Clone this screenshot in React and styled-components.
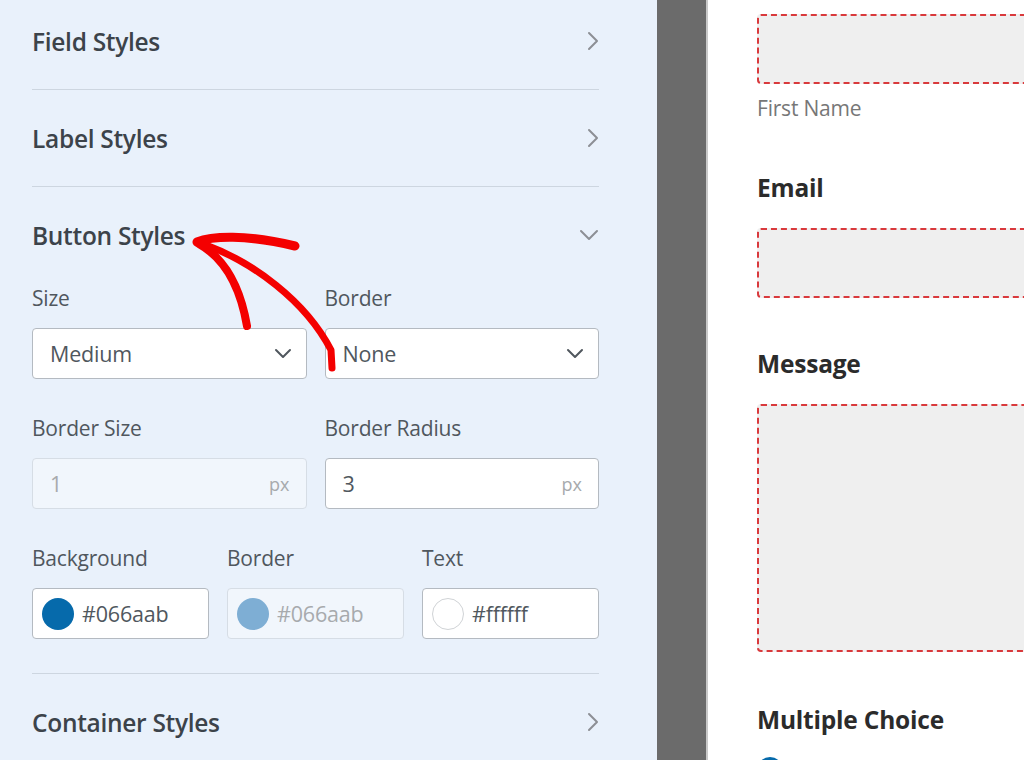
import React from "react";
import styled, { createGlobalStyle } from "styled-components";

const GlobalStyle = createGlobalStyle`
  html, body {
    margin: 0;
    padding: 0;
    overflow: hidden;
  }
  body {
    font-family: "Open Sans", "Noto Sans", sans-serif;
  }
`;

const Page = styled.div`
  position: relative;
  display: flex;
  width: 1024px;
  height: 760px;
  overflow: hidden;
  background: #fff;
`;

const Panel = styled.div`
  width: 657px;
  flex-shrink: 0;
  background: #e9f1fb;
  padding: 0 58px 0 32px;
  box-sizing: border-box;
  overflow: hidden;
`;

const SectionList = styled.div`
  display: flex;
  flex-direction: column;
  margin-top: -7px;
`;

const Section = styled.div`
  border-bottom: 1px solid ${(p) => (p.last ? "transparent" : "#cdd6e0")};
`;

const Header = styled.div`
  display: flex;
  align-items: center;
  justify-content: space-between;
  height: 96px;
`;

const Title = styled.h2`
  margin: 0;
  font-size: 24.5px;
  font-weight: 600;
  color: #3c434a;
  letter-spacing: -0.3px;
`;

const Chevron = styled.svg`
  fill: none;
  stroke: ${(p) => p.color || "#8c8f94"};
  stroke-width: 2;
  stroke-linecap: round;
  stroke-linejoin: round;
  flex-shrink: 0;
`;

const Body = styled.div`
  display: flex;
  flex-direction: column;
  gap: 37px;
  padding: 3px 0 34px;
`;

const Grid = styled.div`
  display: grid;
  grid-template-columns: repeat(${(p) => p.cols}, 1fr);
  column-gap: 18px;
`;

const Field = styled.div`
  display: flex;
  flex-direction: column;
  gap: 18px;
`;

const Label = styled.label`
  font-size: 21px;
  line-height: 24px;
  color: #50575e;
  letter-spacing: -0.2px;
`;

const Control = styled.div`
  display: flex;
  align-items: center;
  height: 51px;
  box-sizing: border-box;
  border: 1px solid ${(p) => (p.disabled ? "#d6dde5" : "#b4bac1")};
  border-radius: 4px;
  background: ${(p) => (p.disabled ? "#f1f6fc" : "#fff")};
  padding: ${(p) => (p.swatch ? "0 12px 0 9px" : "0 14px 0 17px")};
  gap: 8px;
`;

const Value = styled.span`
  flex: 1;
  font-size: 21.5px;
  color: ${(p) => (p.disabled ? "#a7aaad" : "#50575e")};
  white-space: nowrap;
  letter-spacing: -0.2px;
`;

const Unit = styled.span`
  font-size: 18px;
  color: #a7aaad;
  margin-right: 2px;
`;

const Swatch = styled.span`
  width: 32px;
  height: 32px;
  border-radius: 50%;
  box-sizing: border-box;
  background: ${(p) => p.color};
  border: ${(p) => (p.outline ? "1px solid #d0d3d6" : "none")};
  flex-shrink: 0;
`;

const Gutter = styled.div`
  width: 49px;
  flex-shrink: 0;
  background: #6b6b6b;
  border-right: 2px solid #c9c9c9;
`;

const Preview = styled.div`
  flex: 1;
  display: flex;
  flex-direction: column;
  padding: 14px 0 0 49px;
  min-width: 0;
`;

const InputBox = styled.div`
  width: 420px;
  height: ${(p) => p.h}px;
  box-sizing: border-box;
  background: #efefef;
  border: 2px dashed #d9393c;
  border-radius: 4px;
  flex-shrink: 0;
`;

const SubLabel = styled.div`
  margin-top: 12px;
  font-size: 21px;
  line-height: 24px;
  color: #777;
  letter-spacing: -0.2px;
`;

const FieldLabel = styled.div`
  margin-top: ${(p) => p.mt}px;
  margin-bottom: 26px;
  font-size: 24.5px;
  line-height: 28px;
  font-weight: 700;
  color: #2b2b2b;
  letter-spacing: -0.2px;
`;

const Radio = styled.span`
  width: 26px;
  height: 26px;
  border-radius: 50%;
  background: #066aab;
  margin-top: -3px;
  flex-shrink: 0;
`;

const ArrowLayer = styled.svg`
  position: absolute;
  left: 0;
  top: 0;
  width: 1024px;
  height: 760px;
  pointer-events: none;
  fill: none;
  stroke: #f40000;
  stroke-linecap: round;
  stroke-linejoin: round;
`;

const ChevronRight = () => (
  <Chevron width="12" height="20" viewBox="0 0 12 20">
    <polyline points="2,2 10,10 2,18" />
  </Chevron>
);

const ChevronDown = ({ color, small }) =>
  small ? (
    <Chevron width="18" height="11" viewBox="0 0 18 11" color={color}>
      <polyline points="2,2 9,9 16,2" />
    </Chevron>
  ) : (
    <Chevron width="20" height="12" viewBox="0 0 20 12" color={color}>
      <polyline points="2,2 10,10 18,2" />
    </Chevron>
  );

function CollapsedSection({ title, last }) {
  return (
    <Section last={last}>
      <Header>
        <Title>{title}</Title>
        <ChevronRight />
      </Header>
    </Section>
  );
}

function Select({ value }) {
  return (
    <Control>
      <Value>{value}</Value>
      <ChevronDown color="#50575e" small />
    </Control>
  );
}

function NumberInput({ value, disabled }) {
  return (
    <Control disabled={disabled}>
      <Value disabled={disabled}>{value}</Value>
      <Unit>px</Unit>
    </Control>
  );
}

function ColorInput({ color, value, disabled, outline }) {
  return (
    <Control swatch disabled={disabled}>
      <Swatch color={color} outline={outline} />
      <Value disabled={disabled}>{value}</Value>
    </Control>
  );
}

export default function App() {
  return (
    <>
      <GlobalStyle />
      <Page>
        <Panel>
          <SectionList>
            <CollapsedSection title="Field Styles" />
            <CollapsedSection title="Label Styles" />
            <Section>
              <Header>
                <Title>Button Styles</Title>
                <ChevronDown />
              </Header>
              <Body>
                <Grid cols={2}>
                  <Field>
                    <Label>Size</Label>
                    <Select value="Medium" />
                  </Field>
                  <Field>
                    <Label>Border</Label>
                    <Select value="None" />
                  </Field>
                </Grid>
                <Grid cols={2}>
                  <Field>
                    <Label>Border Size</Label>
                    <NumberInput value="1" disabled />
                  </Field>
                  <Field>
                    <Label>Border Radius</Label>
                    <NumberInput value="3" />
                  </Field>
                </Grid>
                <Grid cols={3}>
                  <Field>
                    <Label>Background</Label>
                    <ColorInput color="#066aab" value="#066aab" />
                  </Field>
                  <Field>
                    <Label>Border</Label>
                    <ColorInput color="#7eaed4" value="#066aab" disabled />
                  </Field>
                  <Field>
                    <Label>Text</Label>
                    <ColorInput color="#fff" value="#ffffff" outline />
                  </Field>
                </Grid>
              </Body>
            </Section>
            <CollapsedSection title="Container Styles" last />
          </SectionList>
        </Panel>
        <Gutter />
        <Preview>
          <InputBox h={70} />
          <SubLabel>First Name</SubLabel>
          <FieldLabel mt={54}>Email</FieldLabel>
          <InputBox h={70} />
          <FieldLabel mt={52}>Message</FieldLabel>
          <InputBox h={248} />
          <FieldLabel mt={54}>Multiple Choice</FieldLabel>
          <Radio />
        </Preview>
        <ArrowLayer viewBox="0 0 1024 760">
          <path d="M197 242 C 212 236, 245 234, 295 246" strokeWidth="9" />
          <path d="M199 244 C 224 258, 240 285, 247 326" strokeWidth="8" />
          <path d="M206 245 C 252 262, 305 300, 331 350 L 332 368" strokeWidth="7" />
        </ArrowLayer>
      </Page>
    </>
  );
}
